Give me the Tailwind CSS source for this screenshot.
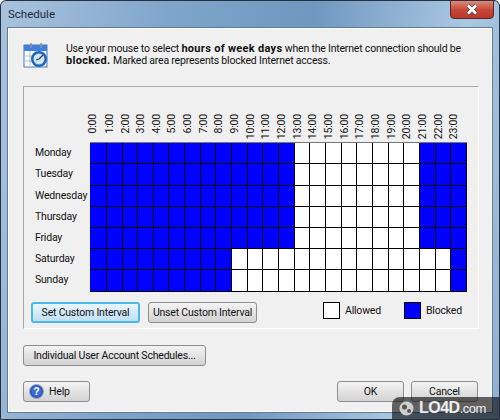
<!DOCTYPE html>
<html lang="en">
<head>
  <meta charset="UTF-8" />
  <title>Schedule</title>
  <script src="https://cdn.jsdelivr.net/npm/@tailwindcss/browser@4"></script>
</head>
<body class="bg-white">

<!-- Window frame -->
<div class="relative w-[500px] h-[420px] overflow-hidden rounded-t-[6px] border border-[#27313d] bg-[linear-gradient(100deg,#a9c3de_0%,#7fa5ca_30%,#6f97bf_55%,#a9c8e2_82%,#8fb0d0_100%)] font-['Roboto',sans-serif] text-[10.5px] leading-[14px] tracking-[-0.2px] text-[#111] whitespace-nowrap">

  <!-- Title bar -->
  <div class="flex h-[26px] items-start justify-between pl-[7px] pr-[5px]">
    <span class="mt-[5px] text-[11.5px] leading-[16px] tracking-normal text-[#1c2a38]">Schedule</span>
    <div class="-mt-px flex h-[19px] w-[44px] items-center justify-center rounded-b-[4px] border border-[#5b2a28] bg-gradient-to-b from-[#dc8a78] via-[#c8483a] to-[#b9362c]">
      <svg width="14" height="11" viewBox="0 0 14 11"><path d="M3 1.5 L11 9.5 M11 1.5 L3 9.5" stroke="#3a4a5a" stroke-width="4"/><path d="M3 1.5 L11 9.5 M11 1.5 L3 9.5" stroke="#fff" stroke-width="2.6"/></svg>
    </div>
  </div>

  <!-- Dialog body -->
  <div class="mx-[6px] h-[386px] border border-[#5d7a96] bg-[#f0f0f0] pl-[15px] pr-[14px] shadow-[inset_0_0_0_1px_#fff]">

    <!-- Intro -->
    <div class="flex h-[58px] pt-[15px]">
      <svg class="-mt-[1px] shrink-0" width="26" height="26" viewBox="0 0 26 26">
        <rect x="1" y="3" width="23" height="22" fill="#fff" stroke="#3f78c8"/>
        <rect x="1" y="3" width="23" height="6" fill="#3f80dc"/>
        <rect x="7" y="1" width="2" height="5" rx="1" fill="#8a9099"/>
        <rect x="17" y="1" width="2" height="5" rx="1" fill="#8a9099"/>
        <path d="M1.5 14H12M1.5 19H12M7 9V25M12 9V25" stroke="#b8bec6"/>
        <circle cx="16" cy="17" r="8" fill="#1f63b8"/>
        <circle cx="16" cy="17" r="5.5" fill="#cfe3f5"/>
        <path d="M16 17L20 13M16 17L13 18" stroke="#34404e" stroke-width="1.2"/>
      </svg>
      <p class="ml-[17px] leading-[12px]">Use your mouse to select <b class="text-[11px] tracking-[0.3px]">hours of week days</b> when the Internet connection should be<br /><b class="text-[11px] tracking-[0.3px]">blocked.</b> Marked area represents blocked Internet access.</p>
    </div>

    <!-- Group box -->
    <div class="h-[243px] w-[456px] border border-t-[#a8a8a8] border-l-[#a8a8a8] border-r-white border-b-white">

      <!-- Hour labels -->
      <div id="hours" class="ml-[66px] grid h-[55px] grid-cols-[17px_16px_15px_16px_15px_16px_16px_15px_16px_16px_15px_16px_16px_15px_16px_16px_15px_16px_16px_15px_16px_16px_15px_16px] pt-[27px]"></div>

      <!-- Day rows -->
      <div class="flex">
        <div class="grid w-[66px] grid-rows-[21px_22px_21px_21px_21px_21px_22px] pl-[11px]">
          <span class="self-center">Monday</span>
          <span class="self-center">Tuesday</span>
          <span class="self-center">Wednesday</span>
          <span class="self-center">Thursday</span>
          <span class="self-center">Friday</span>
          <span class="self-center">Saturday</span>
          <span class="self-center">Sunday</span>
        </div>
        <div id="grid" class="grid grid-cols-[17px_16px_15px_16px_15px_16px_16px_15px_16px_16px_15px_16px_16px_15px_16px_16px_15px_16px_16px_15px_16px_16px_15px_16px] grid-rows-[21px_22px_21px_21px_21px_21px_22px] border-t border-t-[#777]"></div>
      </div>

      <!-- Interval buttons and legend -->
      <div class="mt-[10px] flex items-start pl-[7px]">
        <button class="h-[21px] w-[109px] rounded-[3px] border-2 border-[#4bb8e6] bg-gradient-to-b from-[#eaf6fd] to-[#bfe0f4]">Set Custom Interval</button>
        <button class="ml-[8px] h-[21px] w-[109px] rounded-[3px] border border-[#8e8e8e] bg-gradient-to-b from-[#f4f4f4] to-[#d2d2d2]">Unset Custom Interval</button>
        <div class="ml-[66px] h-[17px] w-[17px] border border-black bg-white"></div>
        <span class="ml-[5px] mt-[2px] w-[53px]">Allowed</span>
        <div class="ml-[6px] h-[17px] w-[17px] border border-black bg-[#0000ff]"></div>
        <span class="ml-[5px] mt-[2px]">Blocked</span>
      </div>
    </div>

    <!-- Footer buttons -->
    <button class="mt-[16px] block h-[21px] w-[183px] rounded-[3px] border border-[#8e8e8e] bg-gradient-to-b from-[#f4f4f4] to-[#d2d2d2]">Individual User Account Schedules...</button>

    <div class="mt-[15px] flex w-[455px]">
      <button class="flex h-[21px] w-[67px] items-center rounded-[3px] border border-[#8e8e8e] bg-gradient-to-b from-[#f4f4f4] to-[#d2d2d2] pl-[5px]">
        <svg width="15" height="15" viewBox="0 0 15 15"><circle cx="7.5" cy="7.5" r="7" fill="#2c55b8" stroke="#9aa9c8"/><circle cx="7.5" cy="7.5" r="5" fill="#3d6ed0"/><text x="7.5" y="11" text-anchor="middle" font-size="10" font-weight="700" fill="#fff" font-family="Liberation Sans">?</text></svg>
        <span class="ml-[5px]">Help</span>
      </button>
      <button class="ml-auto h-[21px] w-[67px] rounded-[3px] border border-[#8e8e8e] bg-gradient-to-b from-[#f4f4f4] to-[#d2d2d2]">OK</button>
      <button class="ml-[7px] h-[21px] w-[67px] rounded-[3px] border border-[#8e8e8e] bg-gradient-to-b from-[#f4f4f4] to-[#d2d2d2]">Cancel</button>
    </div>
  </div>

  <!-- Watermark -->
  <div class="absolute bottom-0 right-0 flex h-[22px] w-[107px] items-center rounded-tl-[8px] bg-black/60 pl-[7px] tracking-normal text-white/90">
    <svg width="15" height="15" viewBox="0 0 15 15"><circle cx="7.5" cy="7.5" r="7" fill="#cfcfcf"/><circle cx="5.5" cy="6" r="2.5" fill="#555"/><circle cx="10" cy="10" r="2" fill="#555"/></svg>
    <span class="ml-[5px] font-['Liberation_Sans',sans-serif] text-[16px] font-bold leading-[20px] tracking-[-0.5px]">LO4D<span class="text-[13px] font-normal">.com</span></span>
  </div>
</div>

<script>
  // hour labels along the top
  var hours = document.getElementById('hours');
  for (var h = 0; h < 24; h++) {
    var label = document.createElement('span');
    label.className = 'self-start justify-self-start -ml-[4px] rotate-180 [writing-mode:vertical-rl] leading-[14px]';
    label.textContent = h + ':00';
    hours.appendChild(label);
  }

  // 1 = blocked, 0 = allowed
  var weekday = '111111111111100000000111';
  var weekend = '111111111000000000000001';
  var rows = [weekday, weekday, weekday, weekday, weekday, weekend, weekend];
  var grid = document.getElementById('grid');
  rows.forEach(function (row, r) {
    for (var c = 0; c < 24; c++) {
      var cell = document.createElement('div');
      cell.className = (row[c] === '1' ? 'bg-[#0000ff]' : 'bg-white') + ' border-r border-b border-black';
      grid.appendChild(cell);
    }
  });
</script>

</body>
</html>
